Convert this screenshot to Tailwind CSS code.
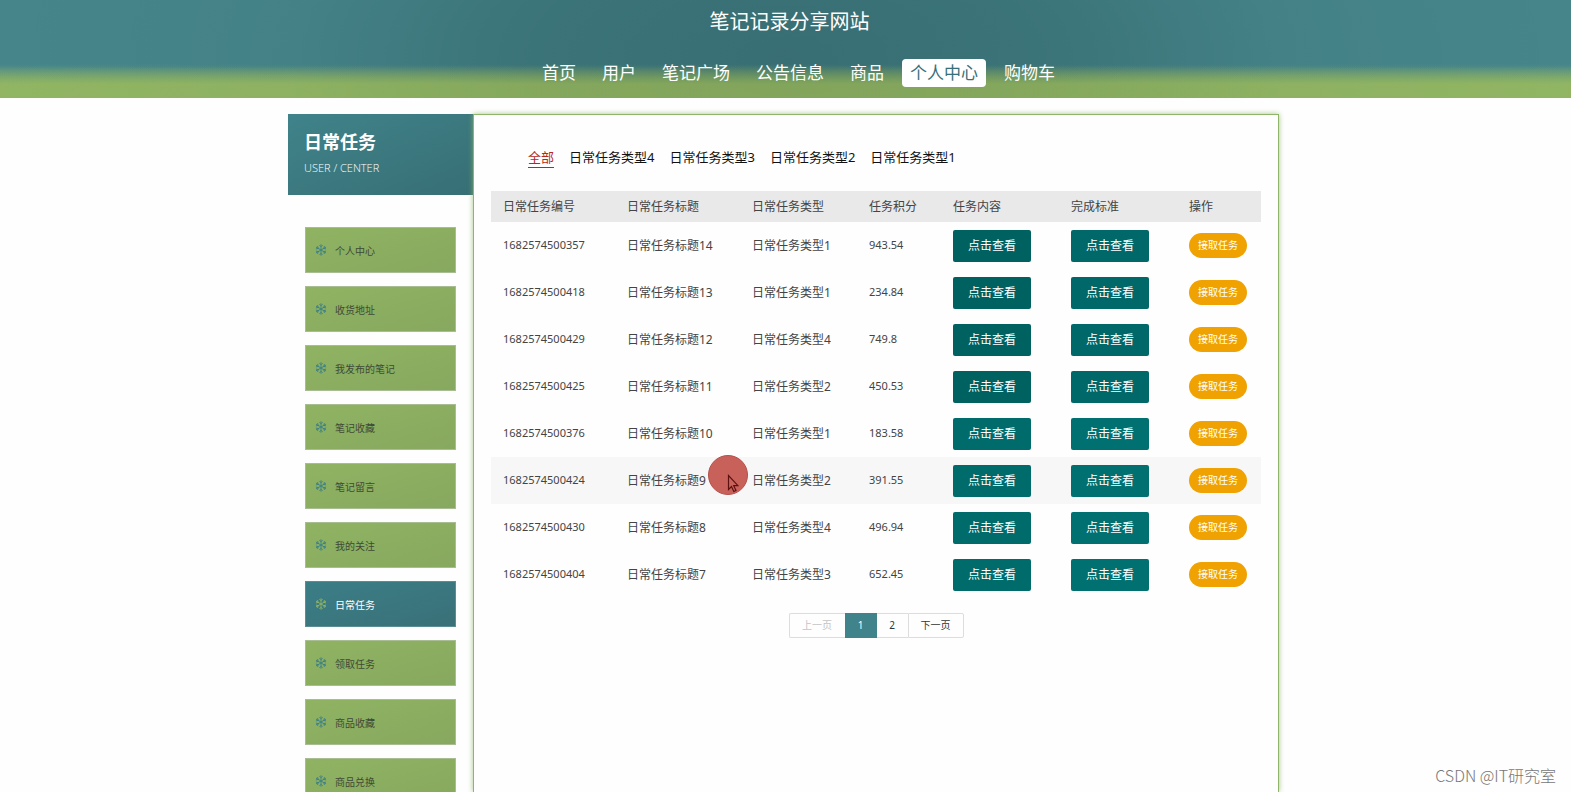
<!DOCTYPE html>
<html lang="zh-CN">
<head>
<meta charset="utf-8">
<meta name="viewport" content="width=device-width, initial-scale=1">
<title>笔记记录分享网站</title>
<script src="https://cdn.jsdelivr.net/npm/@tailwindcss/browser@4"></script>
</head>
<body class="relative flex h-screen flex-col overflow-hidden bg-[#fefefe] font-['Noto_Sans','Noto_Sans_CJK_SC',sans-serif] text-[#444]">
<svg class="hidden" aria-hidden="true">
  <symbol id="flake" viewBox="0 0 24 24">
    <g id="axis" fill="none" stroke="currentColor" stroke-width="1.700">
      <path d="M12 0.500v23M8.800 2.200l3.200 3.300 3.200-3.300M8.800 21.800l3.200-3.300 3.200 3.300"/>
    </g>
    <use href="#axis" transform="rotate(60 12 12)"/>
    <use href="#axis" transform="rotate(120 12 12)"/>
  </symbol>
</svg>

<header class="flex h-[98px] shrink-0 flex-col items-center bg-[linear-gradient(to_bottom,transparent_64px,rgba(145,182,99,0.5)_84px),radial-gradient(ellipse_900px_420px_at_50%_60%,rgba(0,20,25,0.22),rgba(0,20,25,0.18)_28%,rgba(0,20,25,0.06)_55%,transparent),linear-gradient(to_bottom,#47888d_0,#47888d_66px,#91b663_84px,#91b663_98px)] text-white">
  <h1 class="ml-2 mt-[5px] text-xl leading-[34px]">笔记记录分享网站</h1>
  <nav class="ml-[26px] mt-5 flex gap-2.5 text-[17px] leading-7">
    <a href="#" class="px-2">首页</a>
    <a href="#" class="px-2">用户</a>
    <a href="#" class="px-2">笔记广场</a>
    <a href="#" class="px-2">公告信息</a>
    <a href="#" class="px-2">商品</a>
    <a href="#" class="rounded bg-white px-2 text-[#37707a]" aria-current="page">个人中心</a>
    <a href="#" class="px-2">购物车</a>
  </nav>
</header>

<div class="flex min-h-0 grow pr-1 pt-4">
  <div class="mx-auto flex w-full max-w-[991px]">
    <aside class="w-[185px] shrink-0">
      <div class="h-[81px] bg-linear-to-br from-[#40838a] to-[#376f75] pl-4 pt-[14px] text-white">
        <h2 class="text-lg font-bold leading-7">日常任务</h2>
        <p class="font-['Open_Sans','Noto_Sans',sans-serif] text-[11px] font-light leading-6">USER / CENTER</p>
      </div>
      <ul id="menu" class="mt-8 flex flex-col gap-[13px] pl-[17px] pr-[17px]"></ul>
    </aside>

    <main class="min-w-0 grow border border-b-0 border-[#8fb56a] px-[17px] shadow-[0_0_5px_rgba(143,181,100,0.8)]">
      <div class="ml-[37px] mt-8 flex gap-[15px] text-[13px] leading-5 text-[#111]">
        <a href="#" class="border-b border-[#b5291c] text-[#b5291c]">全部</a>
        <a href="#">日常任务类型4</a>
        <a href="#">日常任务类型3</a>
        <a href="#">日常任务类型2</a>
        <a href="#">日常任务类型1</a>
      </div>
      <table class="mt-[23px] w-full table-fixed text-left text-xs">
        <colgroup>
          <col class="w-[124px]"><col class="w-[125px]"><col class="w-[117px]"><col class="w-[84px]"><col class="w-[118px]"><col class="w-[118px]"><col>
        </colgroup>
        <thead>
          <tr class="h-[31px] bg-[#e9e9e9]">
            <th class="pl-3 font-normal">日常任务编号</th><th class="pl-3 font-normal">日常任务标题</th><th class="pl-3 font-normal">日常任务类型</th><th class="pl-3 font-normal">任务积分</th><th class="pl-3 font-normal">任务内容</th><th class="pl-3 font-normal">完成标准</th><th class="pl-3 font-normal">操作</th>
          </tr>
        </thead>
        <tbody id="rows"></tbody>
      </table>
      <nav class="mt-[15px] flex justify-center text-[10px] leading-[23px] text-[#333]" aria-label="分页">
        <button type="button" disabled class="w-14 rounded-l-xs border border-r-0 border-[#ddd] text-[#c4c4c4]">上一页</button>
        <button type="button" class="w-8 border border-[#40838a] bg-[#40838a] text-white">1</button>
        <button type="button" class="w-[31px] border-y border-[#ddd]">2</button>
        <button type="button" class="w-14 rounded-r-xs border border-[#ddd]">下一页</button>
      </nav>
    </main>
  </div>
</div>

<!-- Click highlight and pointer -->
<div class="absolute left-[708px] top-[455px] size-10 rounded-full border border-[#b5504b] bg-[#c9615b]">
  <svg class="absolute left-[18px] top-[18px] h-[19px] w-3" viewBox="0 0 12 19" fill="none" stroke="#5c1010" stroke-width="1.2" aria-hidden="true"><path d="M1.500 1.500v14l3-3 2.300 5 2.200-1-2.300-4.800h4.300z"/></svg>
</div>
<p class="absolute bottom-[5px] right-[15px] font-['Noto_Sans_CJK_SC',sans-serif] text-base font-light leading-6 text-[#777]">CSDN @IT研究室</p>

<script>
  const items = ['个人中心', '收货地址', '我发布的笔记', '笔记收藏', '笔记留言', '我的关注', '日常任务', '领取任务', '商品收藏', '商品兑换'];
  document.getElementById('menu').innerHTML = items.map(name => {
    const active = name === '日常任务';
    const box = active
      ? 'border-[#5b8d94] bg-linear-to-br from-[#3b7e86] to-[#3a7078] text-white'
      : 'border-[#a9bd92] bg-linear-to-br from-[#8fb362] to-[#87a85f] text-[#3f4a36]';
    return `<li><a href="#" class="flex h-[46px] items-center gap-2 border pl-[9px] text-[10px] ${box}">
      <svg class="size-3 ${active ? 'text-[#8fb362]' : 'text-[#3b8088]'}" aria-hidden="true"><use href="#flake"/></svg><span class="pt-0.5">${name}</span></a></li>`;
  }).join('');

  const data = [
    ['1682574500357', '14', '1', '943.54'], ['1682574500418', '13', '1', '234.84'],
    ['1682574500429', '12', '4', '749.8'], ['1682574500425', '11', '2', '450.53'],
    ['1682574500376', '10', '1', '183.58'], ['1682574500424', '9', '2', '391.55'],
    ['1682574500430', '8', '4', '496.94'], ['1682574500404', '7', '3', '652.45']
  ];
  document.getElementById('rows').innerHTML = data.map(([id, title, type, score], i) => `
    <tr class="h-[47px] ${i === 5 ? 'bg-[#f7f7f8]' : ''}">
      <td class="pl-3 text-[11px]">${id}</td><td class="pl-3">日常任务标题${title}</td><td class="pl-3">日常任务类型${type}</td><td class="pl-3 text-[11px]">${score}</td>
      <td class="pl-3"><button type="button" class="block h-8 w-[78px] rounded-xs text-white ${i < 4 ? 'bg-[#006161]' : 'bg-[#006b6b]'}">点击查看</button></td>
      <td class="pl-3"><button type="button" class="block h-8 w-[78px] rounded-xs text-white ${i < 4 ? 'bg-[#006868]' : 'bg-[#007070]'}">点击查看</button></td>
      <td class="pl-3"><button type="button" class="block h-[25px] w-[58px] rounded-full bg-[#efa202] text-[10px] text-white">接取任务</button></td>
    </tr>`).join('');
</script>
</body>
</html>
